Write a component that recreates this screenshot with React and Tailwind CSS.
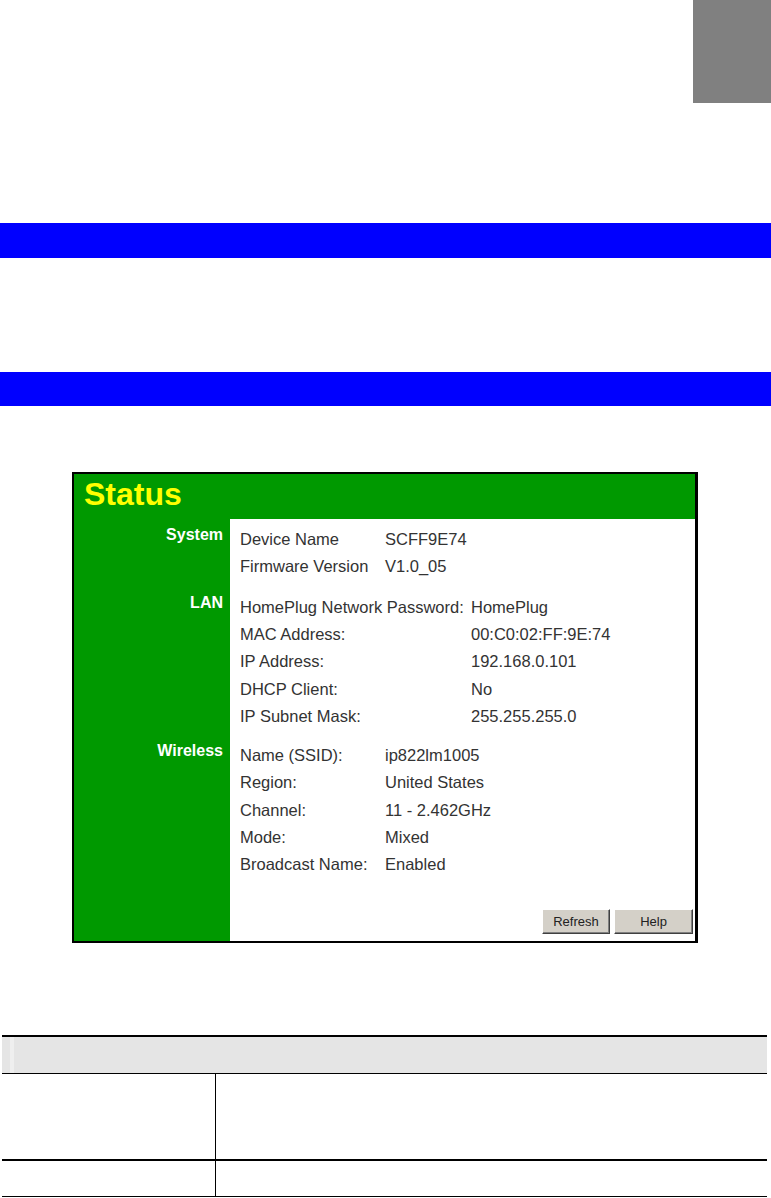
import React from "react";

const font = { fontFamily: '"Liberation Sans", Arial, sans-serif' };

function Row({ label, value, w }) {
  return (
    <div className="flex h-[27.2px] leading-[27.2px] whitespace-nowrap">
      <div style={{ width: w }} className="shrink-0">{label}</div>
      <div>{value}</div>
    </div>
  );
}

function Group({ label, pt, rows, w }) {
  return (
    <>
      <div
        className={`bg-[#009900] text-right pr-[7px] text-white font-bold text-[16px] leading-[18.4px] ${pt}`}
      >
        {label}
      </div>
      <div className={`bg-white pl-[10px] text-[16.5px] text-[#333333] ${pt}`}>
        {rows.map((r) => (
          <Row key={r[0]} label={r[0]} value={r[1]} w={w} />
        ))}
      </div>
    </>
  );
}

function Btn({ children, w }) {
  return (
    <button
      className={`${w} h-[25px] bg-[#D4D0C8] border border-t-white border-l-white border-r-[#404040] border-b-[#404040] shadow-[inset_-1px_-1px_0_#808080] text-[13px] text-[#222] leading-none`}
      style={font}
    >
      {children}
    </button>
  );
}

export default function App() {
  return (
    <div className="w-[771px] h-[1198px] bg-white overflow-hidden" style={font}>
      <div className="h-[223px] flex justify-end items-start">
        <div className="w-[78px] h-[103px] bg-[#808080]" />
      </div>
      <div className="h-[35px] bg-[#0000FF]" />
      <div className="h-[114px]" />
      <div className="h-[34px] bg-[#0000FF]" />
      <div className="h-[66px]" />

      <div className="ml-[72px] w-[626px] h-[471px] border-2 border-r-[3px] border-black flex flex-col">
        <div className="h-[45px] bg-[#009900] pl-[10px] pt-[2px]">
          <span className="text-[32px] font-bold text-[#FFFF00] leading-[36.8px]">Status</span>
        </div>
        <div className="flex-1 grid grid-cols-[156px_1fr] grid-rows-[auto_auto_auto_1fr]">
          <Group
            label="System"
            pt="pt-[6.6px]"
            w={145}
            rows={[
              ["Device Name", "SCFF9E74"],
              ["Firmware Version", "V1.0_05"],
            ]}
          />
          <Group
            label="LAN"
            pt="pt-[14px]"
            w={231}
            rows={[
              ["HomePlug Network Password:", "HomePlug"],
              ["MAC Address:", "00:C0:02:FF:9E:74"],
              ["IP Address:", "192.168.0.101"],
              ["DHCP Client:", "No"],
              ["IP Subnet Mask:", "255.255.255.0"],
            ]}
          />
          <Group
            label="Wireless"
            pt="pt-[12.4px]"
            w={145}
            rows={[
              ["Name (SSID):", "ip822lm1005"],
              ["Region:", "United States"],
              ["Channel:", "11 - 2.462GHz"],
              ["Mode:", "Mixed"],
              ["Broadcast Name:", "Enabled"],
            ]}
          />
          <div className="bg-[#009900]" />
          <div className="bg-white flex justify-end items-end gap-[4px] pr-[2px] pb-[7px]">
            <Btn w="w-[68px]">Refresh</Btn>
            <Btn w="w-[79px]">Help</Btn>
          </div>
        </div>
      </div>

      <div className="h-[92px]" />

      <div className="mx-[2px] w-[765px]">
        <div className="h-[2px] bg-black" />
        <div className="h-[36px] bg-[#E5E5E5] flex">
          <div className="w-[8px]" />
          <div className="w-[4px] bg-[#EFEFEF]" />
        </div>
        <div className="h-[1px] bg-black" />
        <div className="grid grid-cols-[213px_1fr] h-[85px]">
          <div />
          <div className="border-l border-black" />
        </div>
        <div className="h-[2px] bg-black" />
        <div className="grid grid-cols-[213px_1fr] h-[35px]">
          <div />
          <div className="border-l border-black" />
        </div>
        <div className="h-[1px] bg-black" />
      </div>
    </div>
  );
}
